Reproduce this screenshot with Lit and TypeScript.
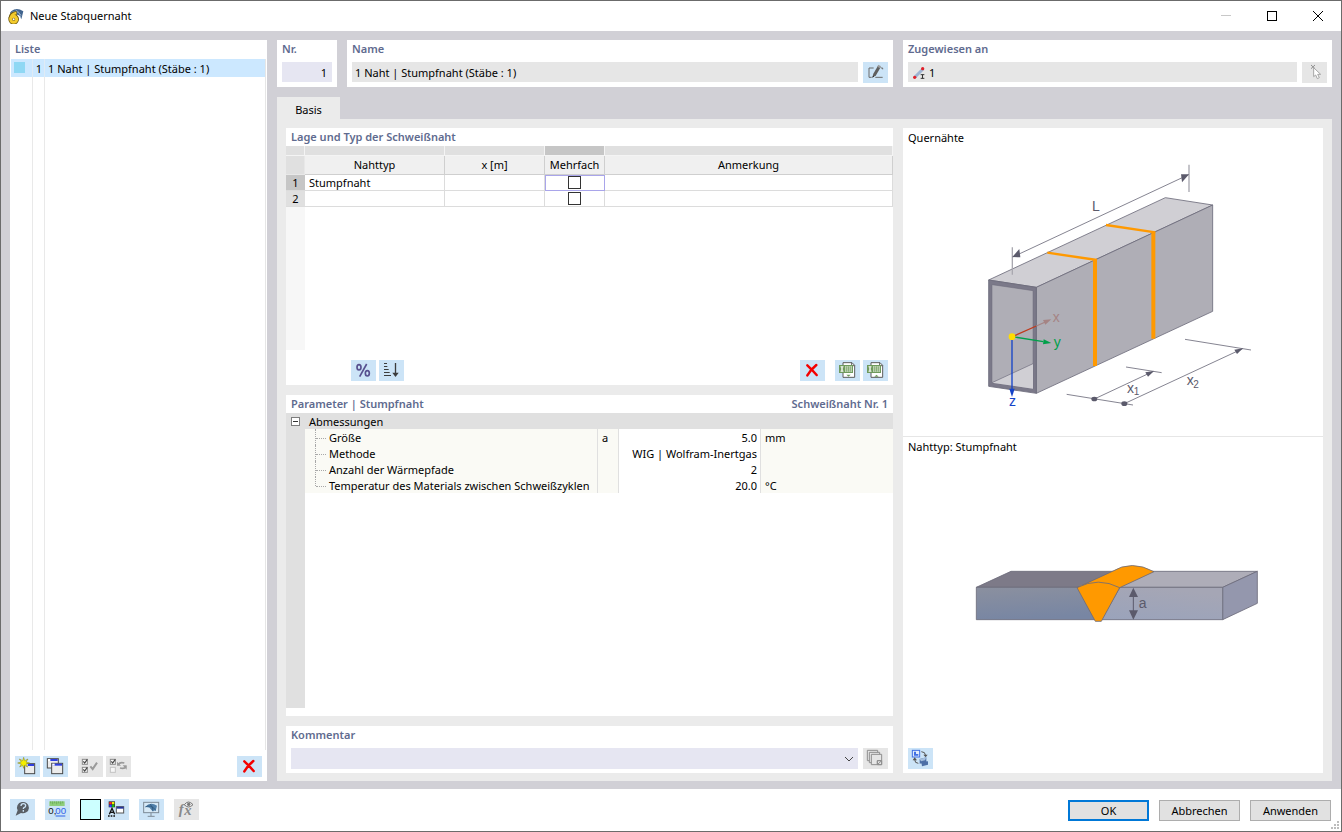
import { LitElement, html, css, svg, nothing } from "lit";
import type { TemplateResult } from "lit";
import { customElement } from "lit/decorators.js";
import { classMap } from "lit/directives/class-map.js";

const box = (x: number, y: number, checked: boolean) => svg`
  <rect x=${x} y=${y} width="15" height="15" fill="#f6f6f6" stroke=${checked ? "#8a8a8a" : "#c2c2c2"} stroke-width="3" />
  ${checked ? svg`<path d="M${x + 3} ${y + 6}l4 5 8-11" fill="none" stroke="#444" stroke-width="3.500" />` : nothing}`;

const miniWindow = (x: number, y: number, w: number, h: number) => svg`
  <rect x=${x} y=${y} width=${w} height=${h} fill="#ececec" stroke="#4a4a4a" stroke-width="3" />
  <rect x=${x + 2} y=${y + 1} width=${w - 4} height="6" fill="#2f3fe0" />
  <rect x=${x + 2} y=${y + 1} width="7" height="6" fill="#fff" />`;

const sheet = (arrow: string) => svg`
  <path d="M24 8h27l8 8v36H24z" fill="#fff" stroke="#5c5c5c" stroke-width="3" />
  <path d="M50 8v9h9" fill="none" stroke="#5c5c5c" stroke-width="3" />
  <rect x="12" y="15" width="42" height="24" fill="#6f9a5c" />
  <path d="M17 20h8M17 34h8M18 20l6 14M24 20l-6 14" stroke="#fff" stroke-width="2.500" />
  <path d="M30 19h21v16H30z" fill="#e3eedd" />
  <path d="M30 24h21M30 30h21M35 19v16M40.500 19v16M46 19v16" stroke="#6f9a5c" stroke-width="2" />
  <path d=${arrow} fill="#6f9a5c" />`;

const icons: Record<string, TemplateResult> = {
  edit: svg`
    <path d="M32 18H18v28h8M37 46h22M54 18h5v4" fill="none" stroke="#6b6b6b" stroke-width="3" />
    <path d="M28 47l3-12 14-24 8 5-14 24z" fill="#5f5f5f" />
    <path d="M43 14l8 5 3-6-8-5z" fill="#9a9a9a" />
    <path d="M28 47l2-6 4 2z" fill="#222" />`,
  pick: svg`
    <path d="M27 9l12 11M39 9L27 20" stroke="#8f8f8f" stroke-width="3" />
    <path d="M35 17v27l6-5 5 11 6-3-5-10h9z" fill="#fff" stroke="#a5a5a5" stroke-width="3" />`,
  percent: svg`
    <g fill="none" stroke="#57508f" stroke-width="5">
      <ellipse cx="24" cy="22" rx="6" ry="8" /><ellipse cx="49" cy="40" rx="6" ry="8" />
      <path d="M47 12L26 50" />
    </g>`,
  sort: svg`
    <path d="M15 10.500h9M15 19.500h10M15 28.500h14M15 37.500h17M15 46.500h21" stroke="#3c3c3c" stroke-width="3.500" />
    <path d="M49.500 9v30" stroke="#3c3c3c" stroke-width="4" />
    <path d="M40 38h19l-9.500 13z" fill="#3c3c3c" />`,
  remove: svg`<path d="M22 16q13 12 28 29M49 15Q33 28 22 46" fill="none" stroke="#f40000" stroke-width="7.500" stroke-linecap="round" />`,
  sheetImport: sheet("M34 44h13l-6.500 6z"),
  sheetExport: sheet("M34 50h13l-6.500-6z"),
  create: svg`
    ${miniWindow(29, 23, 30, 30)}
    <path d="M26 4l3 10 10-5-6 9 11 3-11 3 5 9-9-5-3 9-3-9-9 5 5-9-11-3 11-3-6-9 10 5z" fill="#f5ee00" stroke="#7c7a1e" stroke-width="1.500" />`,
  duplicate: svg`${miniWindow(13, 8, 33, 28)}${miniWindow(26, 22, 33, 31)}`,
  checkAll: svg`
    ${box(13, 10, true)}${box(13, 34, true)}
    <path d="M37 31l7 8 13-19" fill="none" stroke="#9a9a9a" stroke-width="6" />`,
  checkSwap: svg`
    ${box(13, 10, true)}${box(13, 34, false)}
    <path d="M37 26q4-9 18-5M60 31q-4 9-18 5" fill="none" stroke="#9a9a9a" stroke-width="5" />
    <path d="M33 17v12h12zM62 41V28H50z" fill="#9a9a9a" />`,
  help: svg`
    <path d="M17 50L23 34A18 17 0 1 1 33 42z" fill="#595f66" />
    <path d="M33 21q0-7 7-7t7 6q0 4-5 6-2 1-2 4M40 33v5" fill="none" stroke="#cce4f7" stroke-width="4" />`,
  units: svg`
    <rect x="13" y="7" width="46" height="14" fill="#8fce7c" />
    <path d="M17 7v6M23 7v9M29 7v6M35 7v9M41 7v6M47 7v9M53 7v6" stroke="#5fa04b" stroke-width="2" />
    <text x="10" y="46" font-size="29" fill="#111">0,</text>
    <text x="31" y="46" font-size="29" fill="#2f62e8">00</text>
    <path d="M32 51h29" stroke="#2f62e8" stroke-width="3" />`,
  display: svg`
    <path d="M14 7h19v18H14z" fill="#333" />
    <path d="M16 9h7v7h-7z" fill="#f22" /><path d="M24 9h7v7h-7z" fill="#ee0" />
    <path d="M16 17h7v7h-7z" fill="#2b3cff" /><path d="M24 17h7v7h-7z" fill="#1b1" />
    <path d="M16 46l8-18 8 18M19 40h10" fill="none" stroke="#111" stroke-width="4" />
    <path d="M12 51h24" stroke="#111" stroke-width="4" stroke-dasharray="5 3" />
    <rect x="37" y="23" width="22" height="19" fill="#fff" stroke="#555" stroke-width="3" />
    <path d="M38 23h21v6H38z" fill="#23349c" />`,
  view: svg`
    <rect x="14" y="10" width="45" height="31" fill="#d7e9f6" stroke="#7c8a96" stroke-width="3" />
    <path d="M18 24q16-18 36-4l-4 16q-5-4-9 1l-7-8q-2-6-16-5z" fill="#4f7fa9" />
    <path d="M19 24q15-9 31 9M33 15q10 8 9 22" fill="none" stroke="#274e73" stroke-width="2" />
    <path d="M36 42v9M26 52h21" stroke="#7c8a96" stroke-width="3" />`,
  formula: svg`
    <text x="14" y="44" font-size="44" font-style="italic" font-weight="bold" font-family="Liberation Serif, serif" fill="#8a8a8a">f</text>
    <text x="31" y="48" font-size="44" font-style="italic" font-weight="bold" font-family="Liberation Serif, serif" fill="#8a8a8a">x</text>
    <path d="M31 17q12-16 26 0-14 14-26 0z" fill="#e6e6e6" stroke="#777" stroke-width="3" />
    <circle cx="44" cy="16" r="5" fill="#777" />`,
  stack: svg`
    <g fill="#e6e6e6" stroke="#8f8f8f" stroke-width="3">
      <path d="M13 7h31v31H13z" /><path d="M19 13h31v31H19z" /><path d="M25 19h31v31H25z" />
      <path d="M43 38h13L43 50z" /><path d="M43 38h13v12H43z" fill="none" />
    </g>`,
  swap: svg`
    <rect x="13" y="7" width="22" height="20" fill="#e2edfb" stroke="#3f6fe4" stroke-width="3" />
    <path d="M18 11v12h13v-5h-7v-7z" fill="#3f6fe4" />
    <path d="M40 11q12 0 13 12M31 46q-11 0-11-12" fill="none" stroke="#555" stroke-width="3" />
    <path d="M46 20h13l-6 8zM14 37h13l-7-9z" fill="#555" />
    <path d="M35 33l20-5v14l-20 5zM40 43l20-3v10l-18 5z" fill="#4d6fa6" />
    <path d="M35 33l20-5-4 9-12 3z" fill="#a5bedd" />`,
};

const beamDiagram = svg`
  <g stroke="#6c6b7b" stroke-width="2.500" stroke-linejoin="round">
    <path d="M86 390L616 143L758 165L229 412z" fill="#d0cfd4" />
    <path d="M229 412L758 165V484L229 730z" fill="#afaeb6" />
    <path d="M86 390L229 412V730L86 709z" fill="#7b7989" />
  </g>
  <path d="M96 404L219 422V716L96 698z" fill="#afaeb6" stroke="#6c6b7b" stroke-width="1.500" />
  <path d="M96 698L219 641V716z" fill="#d0cfd4" />
  <path d="M96 698L219 641" stroke="#6c6b7b" stroke-width="2" />
  <g fill="none" stroke="#ff9900" stroke-width="12">
    <path d="M405 648V329" /><path d="M580 566V246" />
    <path d="M262 308L411 330M438 225L586 247" stroke-width="7" />
  </g>
  <g stroke="#a9a8b0" stroke-width="4"><path d="M157 292V374M687 44V126" /></g>
  <g stroke="#6c6b7b" stroke-width="2.500">
    <path d="M158 321L686 74M403 747L580 664M493 761L848 596" />
    <path d="M320 733L519 765M498 651L605 668M675 568L873 600" />
  </g>
  <g fill="#5b5a6b">
    <path d="M157 321L178 297L181 322z" /><path d="M687 73L663 73L666 97z" />
    <path d="M582 663L556 667L564 680z" /><path d="M849 595L823 599L831 612z" />
    <ellipse cx="403" cy="747" rx="9" ry="7" /><ellipse cx="493" cy="761" rx="9" ry="7" />
  </g>
  <g fill="#5b5a6b" font-size="42">
    <text x="396" y="184">L</text>
    <text x="501" y="728">x</text><text x="521" y="736" font-size="30">1</text>
    <text x="680" y="705">x</text><text x="700" y="714" font-size="30">2</text>
  </g>
  <path d="M157 560L229 528" stroke="#c03a1c" stroke-width="4" />
  <path d="M229 528L256 516" stroke="#a58484" stroke-width="4" />
  <path d="M274 508L249 510L256 524z" fill="#a58484" />
  <path d="M157 560L250 575" stroke="#00a04a" stroke-width="4" />
  <path d="M274 579L251 568L249 583z" fill="#00a04a" />
  <path d="M156 560V720" stroke="#1443c8" stroke-width="4" />
  <path d="M156 741L148 716H164z" fill="#1443c8" />
  <circle cx="156" cy="560" r="10" fill="#ffdd00" />
  <text x="278" y="516" font-size="42" fill="#a58484">x</text>
  <text x="281" y="592" font-size="42" fill="#00a04a">y</text>
  <text x="147" y="769" font-size="42" fill="#1443c8">z</text>`;

const weldDiagram = svg`
  <defs>
    <linearGradient id="left" x1="0" y1="0" x2="0.2" y2="1">
      <stop offset="0" stop-color="#8b909f" /><stop offset="1" stop-color="#7886a3" />
    </linearGradient>
    <linearGradient id="right" x1="0" y1="1" x2="0.4" y2="0">
      <stop offset="0" stop-color="#9aa3bb" /><stop offset="1" stop-color="#a5a6b5" />
    </linearGradient>
  </defs>
  <g stroke="#6c6b7b" stroke-width="2.500" stroke-linejoin="round">
    <path d="M49 112L153 64H470L370 112z" fill="#7d7a88" />
    <path d="M470 112L575 64H892L788 112z" fill="#aeadb8" />
    <path d="M788 112L892 64V160L788 209z" fill="#9497ad" />
    <path d="M49 112H360L407 209H49z" fill="url(#left)" />
    <path d="M480 112H788V209H424z" fill="url(#right)" />
    <path d="M351 113L455 65Q515 28 582 65L479 113z" fill="#ff9900" />
    <path d="M351 113Q415 80 479 113L424 214H406z" fill="#ff9900" />
  </g>
  <path d="M520 120V202" stroke="#5b5a6b" stroke-width="3" />
  <path d="M520 113L507 141H534zM520 209L507 181H534z" fill="#5b5a6b" />
  <text x="536" y="174" font-size="42" fill="#5b5a6b">a</text>`;

interface Parameter {
  name: string;
  symbol: string;
  value: string;
  unit: string;
}

@customElement("tool-icon")
class ToolIcon extends LitElement {
  static properties = { name: {} };
  declare name: string;
  static styles = css`
    :host { display: block; width: 25px; height: 21px; }
    .glyph { display: block; width: 100%; height: 100%; font-family: "Liberation Sans", Arial, sans-serif; }
  `;
  render() {
    return html`<svg class="glyph" viewBox="0 0 75 63" aria-hidden="true">${icons[this.name]}</svg>`;
  }
}

@customElement("app-root")
class AppRoot extends LitElement {
  static styles = css`
    :host {
      display: block;
      color: #000;
      font: 11px/16px "Noto Sans", "Open Sans", sans-serif;
    }
    * { box-sizing: border-box; }
    button, input, select { font: inherit; color: inherit; margin: 0; padding: 0; border: 0; border-radius: 0; }
    svg { display: block; }
    .window {
      display: grid;
      grid-template-rows: 30px 1fr 42px;
      min-height: 100vh;
      border: 1px solid #6b6b6b;
      background: #fff;
    }
    .titlebar { display: flex; align-items: center; padding-left: 7px; }
    .title { flex: 1; margin: 0 0 0 6px; font-size: 11px; font-weight: 400; }
    .caption { display: grid; place-items: center; width: 46px; height: 30px; background: none; }
    .main {
      display: grid;
      grid-template-columns: 257px minmax(0, 1fr);
      gap: 10px;
      padding: 9px 9px 8px;
      background: #d1d0d6;
    }
    .panel { display: flex; flex-direction: column; background: #fff; min-width: 0; }
    .heading { margin: 0; padding: 1px 5px; font-size: 11px; line-height: 16px; font-weight: 600; color: #5f6b8f; display: flex; justify-content: space-between; }
    .tool { display: block; flex: none; width: 25px; height: 21px; background: #cce4f7; }
    .tool.off { background: #e6e6e6; }
    .tools { display: flex; gap: 3px; padding: 0 5px 4px; }
    .spaced { margin-left: 7px; }
    .push { margin-left: auto; }

    .list {
      flex: 1;
      margin: 1px 1px 6px;
      padding: 0;
      list-style: none;
      border-right: 1px solid #e6e6e6;
      background: linear-gradient(to right, transparent 21px, #e9e9e9 21px 22px, transparent 22px 33px, #e9e9e9 33px 34px, transparent 34px);
    }
    .entry { display: grid; grid-template-columns: 21px 12px 1fr; height: 18px; background: #cce8ff; }
    .swatch { width: 11px; height: 11px; margin: 3px 0 0 3px; background: #8fd8f4; }
    .cell-no { padding: 2px 2px 0 0; text-align: right; border-left: 1px solid #e0ebf5; }
    .cell-name { padding: 2px 0 0 3px; border-left: 1px solid #e0ebf5; }

    .work { display: grid; grid-template-rows: auto 1fr; gap: 10px; min-width: 0; }
    .top { display: grid; grid-template-columns: 60px minmax(0, 1fr) 429px; gap: 10px; }
    .field-row { display: flex; gap: 5px; padding: 4px 5px; }
    .field { flex: 1; min-width: 0; height: 20px; padding: 0 3px; background: #e6e6e6; }
    .number { background: #e6e6f2; text-align: right; padding-right: 5px; }
    .assigned { display: flex; align-items: center; gap: 4px; padding: 2px 5px 0; }
    .assigned-input { flex: 1; min-width: 0; background: none; }

    .tabbed { display: flex; flex-direction: column; min-width: 0; }
    .tabs { display: flex; }
    .tab { width: 63px; height: 22px; padding-top: 3px; background: #ebebeb; }
    .page {
      flex: 1;
      display: grid;
      grid-template-columns: minmax(0, 1fr) 420px;
      gap: 10px;
      padding: 9px 9px 8px;
      background: #ebebeb;
    }
    .forms { display: grid; grid-template-rows: 257px minmax(0, 1fr) auto; gap: 10px; min-width: 0; }

    .grid-area { flex: 1; margin-bottom: 10px; background: linear-gradient(to right, #f7f7f7 19px, transparent 19px); }
    .grid { width: 100%; table-layout: fixed; border-collapse: separate; border-spacing: 0; }
    .grid th, .grid td { padding: 0; border: 0 solid #dcdcdc; font-weight: 400; }
    .grid .strip { height: 10px; background: #e0e0e0; border-width: 0 1px 1px 0; border-color: #f4f4f4; }
    .grid .strip.hot { background: #c6c6c6; }
    .grid .head { height: 19px; background: #f0f0f0; border-width: 0 1px 1px 0; border-color: #cfcfcf; }
    .grid .head.corner { background: #e0e0e0; border-color: #e8e8e8; }
    .grid tbody th { height: 16px; line-height: 15px; background: #e0e0e0; border-width: 0 0 1px; }
    .grid tbody th.hot { background: #c6c6c6; }
    .grid tbody td { height: 16px; line-height: 15px; padding-left: 4px; border-width: 0 1px 1px 0; }
    .grid tbody td.center { padding: 0; }
    .grid tbody td.focus { border-color: #a9a5ea; box-shadow: inset 1px 1px 0 #a9a5ea; }
    .check { display: block; appearance: none; width: 13px; height: 13px; margin: 0 auto; border: 1px solid #333; background: #fff; }
    .grid-tools { padding-left: 65px; }
    .c19 { width: 19px; } .c140 { width: 140px; } .c100 { width: 100px; } .c60 { width: 60px; }
    .c293 { width: 293px; } .c21 { width: 21px; } .c142 { width: 142px; }

    .param-area { flex: 1; margin-bottom: 8px; background: linear-gradient(to right, #e0e0e0 19px, transparent 19px); }
    .params { width: 100%; table-layout: fixed; border-collapse: separate; border-spacing: 0; }
    .params th, .params td { height: 16px; padding: 2px 0 0; line-height: 14px; text-align: left; font-weight: 400; white-space: nowrap; }
    .params .group { background: #e0e0e0; }
    .params .soft { background: #fafaf5; }
    .params .line { border-right: 1px solid #e0e0e0; }
    .params td.sym, .params td.unit { padding-left: 4px; }
    .params td.value { text-align: right; padding-right: 3px; }
    .params td.toggle { padding: 0 0 0 5px; }
    .params th.name { padding: 0 0 0 10px; }
    .params th.group-name { padding-left: 4px; }
    .expander { display: grid; place-items: center; width: 9px; height: 9px; border: 1px solid #7d7d7d; background: #fff; }
    .leaf { display: grid; grid-template-columns: 11px 1fr; gap: 3px; height: 16px; }
    .leaf-text { padding-top: 2px; }
    .branch { height: 16px; border-left: 1px dotted #a8a8a8; }
    .branch::before { content: ""; display: block; height: 9px; border-bottom: 1px dotted #a8a8a8; }
    .params tr:last-child .branch { height: 9px; }

    .combo { flex: 1; display: grid; grid-template-columns: 1fr 14px; align-items: center; background: #e6e6f2; }
    .combo-select { grid-area: 1 / 1 / 2 / 3; width: 100%; height: 21px; padding-left: 4px; appearance: none; background: none; }
    .chevron { grid-area: 1 / 2; pointer-events: none; }

    .preview { display: grid; grid-template-rows: 309px minmax(0, 1fr); background: #fff; }
    .figure { display: flex; flex-direction: column; margin: 0; }
    .figure.first { border-bottom: 1px solid #e6e6e6; }
    .figure-title { padding: 2px 5px 4px; }
    .drawing { flex: 1; display: grid; place-items: center; }
    .drawing svg { font-family: "Liberation Sans", Arial, sans-serif; }

    .footer { display: flex; align-items: flex-start; gap: 10px; padding: 10px 0 0 9px; }
    .pair { display: flex; gap: 3px; }
    .color { width: 21px; height: 21px; border: 1px solid #000; background: #ccffff; }
    .actions { display: flex; align-self: stretch; gap: 10px; margin-left: auto; padding-top: 1px; }
    .action { width: 81px; height: 21px; border: 1px solid #adadad; background: #e1e1e1; text-align: center; }
    .action.default { border: 2px solid #0078d7; }
    .grip { align-self: flex-end; margin: 0 1px 1px -10px; }
  `;

  private parameters: Parameter[] = [
    { name: "Größe", symbol: "a", value: "5.0", unit: "mm" },
    { name: "Methode", symbol: "", value: "WIG | Wolfram-Inertgas", unit: "" },
    { name: "Anzahl der Wärmepfade", symbol: "", value: "2", unit: "" },
    { name: "Temperatur des Materials zwischen Schweißzyklen", symbol: "", value: "20.0", unit: "°C" },
  ];

  private tool(icon: string, label: string, place = "", disabled = false) {
    const classes = { tool: true, spaced: place === "spaced", push: place === "push", off: disabled };
    return html`<button class=${classMap(classes)} type="button" aria-label=${label} ?disabled=${disabled}>
      <tool-icon name=${icon}></tool-icon>
    </button>`;
  }

  private renderTitlebar() {
    return html`<header class="titlebar">
      <svg width="16" height="16" viewBox="0 0 48 48" aria-hidden="true">
        <path d="M6 14Q22-6 46 10L40 34Q38 22 28 20L12 22z" fill="#41648e" />
        <path d="M10 14Q24 4 40 22M22 5q14 6 16 26" fill="none" stroke="#a9bfd6" stroke-width="2" />
        <path d="M26 15Q8 16 7 32" fill="none" stroke="#6f5a12" stroke-width="12" />
        <circle cx="17" cy="34" r="10" fill="#fff" stroke="#6f5a12" stroke-width="12" />
        <path d="M25 15Q9 18 8 33" fill="none" stroke="#f3cb2c" stroke-width="8" />
        <circle cx="17" cy="34" r="9" fill="#6f5a12" stroke="#f3cb2c" stroke-width="9" />
        <circle cx="17" cy="34" r="3" fill="#fff" />
      </svg>
      <h1 class="title">Neue Stabquernaht</h1>
      <button class="caption" type="button" aria-label="Minimieren" disabled>
        <svg width="10" height="10"><path d="M0 4.500h10" stroke="#c8c8c8" /></svg>
      </button>
      <button class="caption" type="button" aria-label="Maximieren">
        <svg width="10" height="10"><rect x=".5" y=".5" width="9" height="9" fill="none" stroke="#000" /></svg>
      </button>
      <button class="caption" type="button" aria-label="Schließen">
        <svg width="10" height="10"><path d="M0 0l10 10M10 0L0 10" stroke="#000" /></svg>
      </button>
    </header>`;
  }

  private renderList() {
    return html`<section class="panel">
      <h2 class="heading">Liste</h2>
      <ul class="list">
        <li class="entry">
          <span class="swatch"></span><span class="cell-no">1</span>
          <span class="cell-name">1 Naht | Stumpfnaht (Stäbe : 1)</span>
        </li>
      </ul>
      <div class="tools">
        ${this.tool("create", "Neu")} ${this.tool("duplicate", "Kopieren")}
        ${this.tool("checkAll", "Alle auswählen", "spaced", true)} ${this.tool("checkSwap", "Auswahl umkehren", "", true)}
        ${this.tool("remove", "Löschen", "push")}
      </div>
    </section>`;
  }

  private renderTop() {
    return html`<div class="top">
      <section class="panel">
        <label class="heading" for="no">Nr.</label>
        <div class="field-row"><input id="no" class="field number" .value=${"1"} /></div>
      </section>
      <section class="panel">
        <label class="heading" for="name">Name</label>
        <div class="field-row">
          <input id="name" class="field" readonly .value=${"1 Naht | Stumpfnaht (Stäbe : 1)"} />
          ${this.tool("edit", "Name bearbeiten")}
        </div>
      </section>
      <section class="panel">
        <label class="heading" for="assigned">Zugewiesen an</label>
        <div class="field-row">
          <div class="field assigned">
            <svg width="12" height="12" viewBox="0 0 36 36" aria-hidden="true">
              <path d="M6 30L30 6" stroke="#9db4d2" stroke-width="9" />
              <circle cx="5" cy="31" r="5" fill="#e0202a" /><circle cx="29" cy="5" r="5" fill="#e0202a" />
              <path d="M23 23h11M23 34h11M28.500 23v11" stroke="#333" stroke-width="3" />
            </svg>
            <input id="assigned" class="assigned-input" readonly .value=${"1"} />
          </div>
          ${this.tool("pick", "Auswählen", "", true)}
        </div>
      </section>
    </div>`;
  }

  private renderWelds() {
    return html`<section class="panel">
      <h2 class="heading">Lage und Typ der Schweißnaht</h2>
      <div class="grid-area">
        <table class="grid">
          <colgroup><col class="c19" /><col class="c140" /><col class="c100" /><col class="c60" /><col /></colgroup>
          <thead>
            <tr><td class="strip"></td><td class="strip"></td><td class="strip"></td><td class="strip hot"></td><td class="strip"></td></tr>
            <tr>
              <td class="head corner"></td>
              <th class="head">Nahttyp</th><th class="head">x [m]</th><th class="head">Mehrfach</th><th class="head">Anmerkung</th>
            </tr>
          </thead>
          <tbody>
            ${["Stumpfnaht", ""].map(
              (type, i) => html`<tr>
                <th class=${classMap({ hot: i === 0 })}>${i + 1}</th>
                <td>${type}</td><td></td>
                <td class=${classMap({ center: true, focus: i === 0 })}>
                  <input class="check" type="checkbox" aria-label="Mehrfach, Zeile ${i + 1}" />
                </td>
                <td></td>
              </tr>`
            )}
          </tbody>
        </table>
      </div>
      <div class="tools grid-tools">
        ${this.tool("percent", "Relativ")} ${this.tool("sort", "Sortieren")}
        ${this.tool("remove", "Zeile löschen", "push")}
        ${this.tool("sheetImport", "Tabelle importieren", "spaced")} ${this.tool("sheetExport", "Tabelle exportieren")}
      </div>
    </section>`;
  }

  private renderParameters() {
    return html`<section class="panel">
      <h2 class="heading"><span>Parameter | Stumpfnaht</span><span>Schweißnaht Nr. 1</span></h2>
      <div class="param-area">
        <table class="params">
          <colgroup><col class="c19" /><col class="c293" /><col class="c21" /><col class="c142" /><col /></colgroup>
          <tbody>
            <tr>
              <td class="group toggle">
                <button class="expander" type="button" aria-label="Zuklappen">
                  <svg width="5" height="1"><path d="M0 .5h5" stroke="#333" /></svg>
                </button>
              </td>
              <th class="group group-name" colspan="4">Abmessungen</th>
            </tr>
            ${this.parameters.map(
              (p) => html`<tr>
                <td></td>
                <th class="soft line name">
                  <div class="leaf"><span class="branch"></span><span class="leaf-text">${p.name}</span></div>
                </th>
                <td class="soft line sym">${p.symbol}</td>
                <td class="line value">${p.value}</td>
                <td class="soft unit">${p.unit}</td>
              </tr>`
            )}
          </tbody>
        </table>
      </div>
    </section>`;
  }

  private renderComment() {
    return html`<section class="panel">
      <label class="heading" for="comment">Kommentar</label>
      <div class="field-row">
        <div class="combo">
          <select id="comment" class="combo-select"><option></option></select>
          <svg class="chevron" width="10" height="6" aria-hidden="true"><path d="M1 1l4 4 4-4" fill="none" stroke="#444" /></svg>
        </div>
        ${this.tool("stack", "Kommentar übernehmen", "", true)}
      </div>
    </section>`;
  }

  private renderPreview() {
    return html`<aside class="preview">
      <figure class="figure first">
        <figcaption class="figure-title">Quernähte</figcaption>
        <div class="drawing"><svg width="320" height="286" viewBox="-21 0 960 858">${beamDiagram}</svg></div>
      </figure>
      <figure class="figure">
        <figcaption class="figure-title">Nahttyp: Stumpfnaht</figcaption>
        <div class="drawing"><svg width="320" height="126" viewBox="-21 -27 960 378">${weldDiagram}</svg></div>
        <div class="tools">${this.tool("swap", "Ansicht wechseln")}</div>
      </figure>
    </aside>`;
  }

  private renderFooter() {
    return html`<footer class="footer">
      ${this.tool("help", "Hilfe")} ${this.tool("units", "Einheiten")}
      <div class="pair">
        <button class="color" type="button" aria-label="Farbe"></button>
        ${this.tool("display", "Darstellung")}
      </div>
      ${this.tool("view", "Ansicht")} ${this.tool("formula", "Formel", "", true)}
      <div class="actions">
        <button class="action default" type="submit">OK</button>
        <button class="action" type="button">Abbrechen</button>
        <button class="action" type="button">Anwenden</button>
      </div>
      <svg class="grip" width="9" height="9" aria-hidden="true">
        <path d="M6 0h2v2H6zM3 3h2v2H3zM6 3h2v2H6zM0 6h2v2H0zM3 6h2v2H3zM6 6h2v2H6z" fill="#bdbdbd" />
      </svg>
    </footer>`;
  }

  render() {
    return html`<div class="window">
      ${this.renderTitlebar()}
      <main class="main">
        ${this.renderList()}
        <div class="work">
          ${this.renderTop()}
          <div class="tabbed">
            <div class="tabs" role="tablist"><button class="tab" role="tab" aria-selected="true">Basis</button></div>
            <div class="page">
              <div class="forms">${this.renderWelds()} ${this.renderParameters()} ${this.renderComment()}</div>
              ${this.renderPreview()}
            </div>
          </div>
        </div>
      </main>
      ${this.renderFooter()}
    </div>`;
  }
}
